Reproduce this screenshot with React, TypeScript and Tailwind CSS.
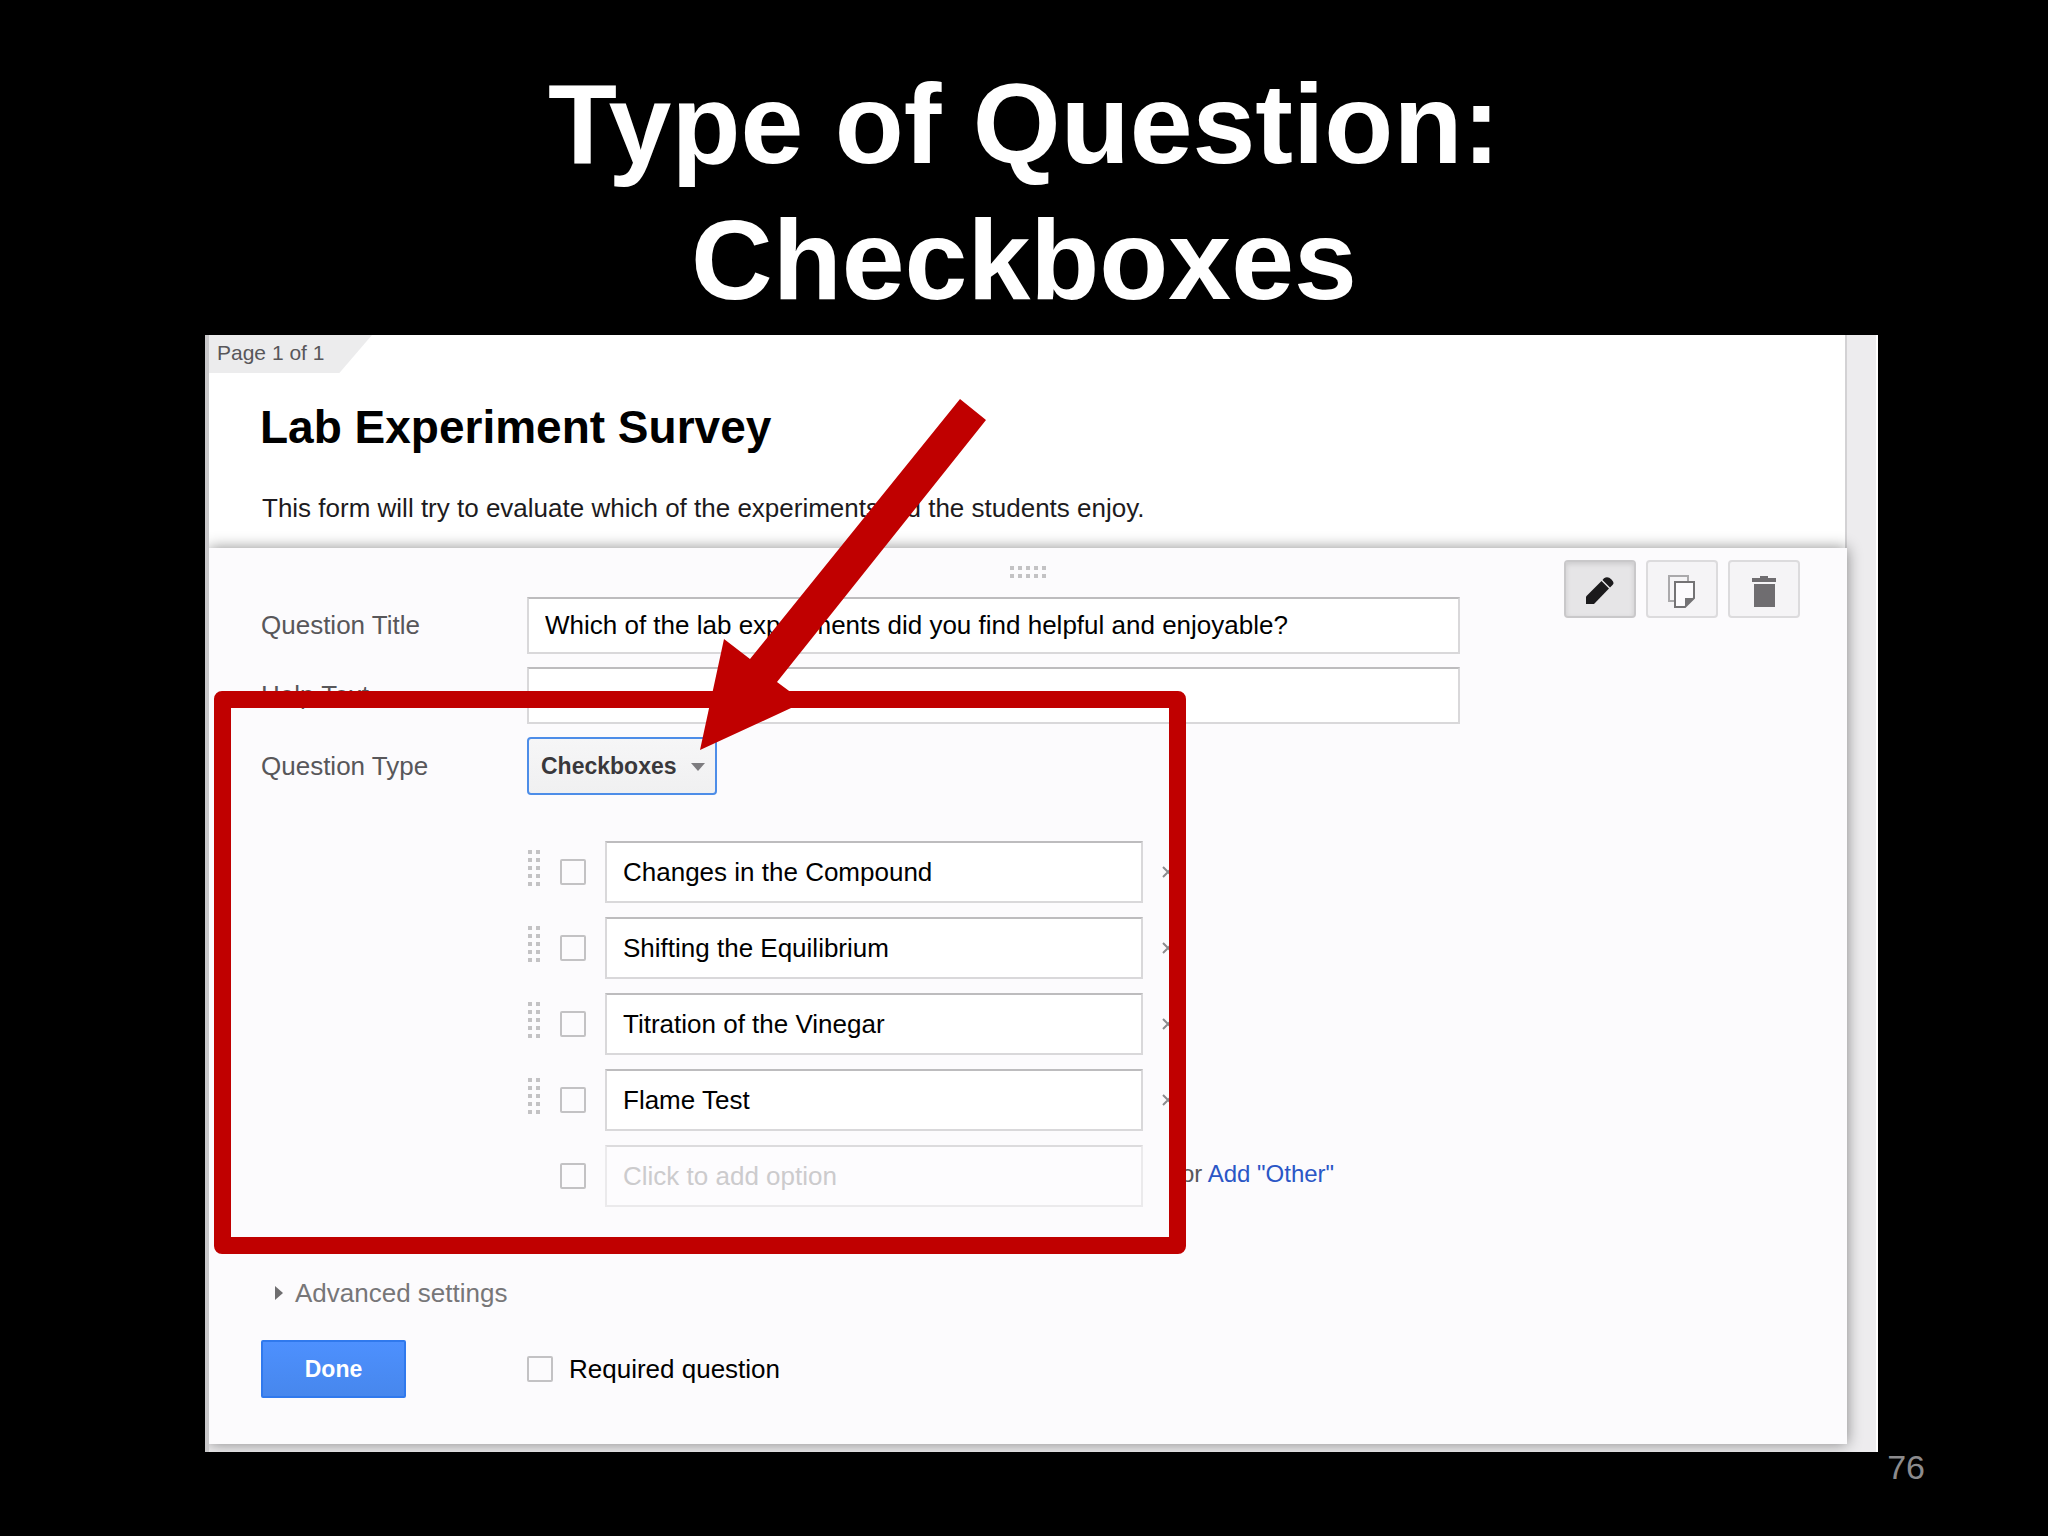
import { useState } from "react";

const INITIAL_OPTIONS = [
  "Changes in the Compound",
  "Shifting the Equilibrium",
  "Titration of the Vinegar",
  "Flame Test",
];

const QUESTION_TYPES = ["Checkboxes", "Text", "Multiple choice", "Scale", "Grid"];

interface DotGridProps {
  readonly columns: number;
  readonly rows: number;
}

/** Dotted drag handle, 4px dots on an 8px pitch. */
function DotGrid({ columns, rows }: DotGridProps) {
  const dots = Array.from({ length: columns * rows }, (_, i) => i);

  return (
    <svg
      width={columns * 8 - 4}
      height={rows * 8 - 4}
      className="block shrink-0 fill-[#c3c2c4]"
      aria-hidden
    >
      {dots.map((i) => (
        <rect key={i} x={(i % columns) * 8} y={Math.floor(i / columns) * 8} width="4" height="4" />
      ))}
    </svg>
  );
}

function PencilIcon() {
  return (
    <svg width="28" height="28" viewBox="0 0 28 28" fill="#1b1a1c" aria-hidden>
      <path d="M0 19.5 15.5 4l7.5 7.5L8 27H0z" />
      <path d="M16.5 3 18 1.2Q22-1 25.5 2.5T26.5 8L24 10.5z" />
    </svg>
  );
}

function CopyIcon() {
  return (
    <svg width="28" height="33" viewBox="0 0 28 33" fill="none" aria-hidden>
      <path d="M1 1h19v25H1z" stroke="#aaa9ab" strokeWidth="2" />
      <path d="M7 7h19v16l-9 9H7z" fill="#fcfbfd" stroke="#747375" strokeWidth="2" />
      <path d="M17 32v-9h9z" fill="#747375" />
    </svg>
  );
}

function TrashIcon() {
  return (
    <svg width="24" height="31" viewBox="0 0 24 31" fill="#6f6d70" aria-hidden>
      <path d="M8 0h8v2h8v4H0V2h8zM2 8h21v23H2z" />
    </svg>
  );
}

const TOOLS = [
  { label: "Edit", icon: <PencilIcon />, active: true },
  { label: "Duplicate", icon: <CopyIcon />, active: false },
  { label: "Delete", icon: <TrashIcon />, active: false },
];

const fieldClass =
  "border-2 border-[#d9d8da] border-t-[#bdbcbe] bg-white px-4 text-[26px] text-black outline-none";
const checkboxClass =
  "size-[26px] shrink-0 appearance-none rounded-xs border-2 border-[#c3c2c4] bg-[#fcfbfd] checked:bg-[#4a8cf7]";
const labelClass = "w-[266px] shrink-0 text-[26px] text-[#58575a]";

function OptionRows() {
  const [options, setOptions] = useState(INITIAL_OPTIONS);

  const rename = (index: number, value: string) => {
    setOptions(options.map((option, i) => (i === index ? value : option)));
  };

  return (
    <div className="mt-[46px] flex flex-col gap-3.5 pl-[267px]">
      {options.map((option, index) => (
        <div key={index} className="flex h-[62px] items-center">
          <div className="pb-2">
            <DotGrid columns={2} rows={5} />
          </div>
          <input type="checkbox" className={`ml-5 ${checkboxClass}`} aria-label={`Select option ${index + 1}`} />
          <input
            type="text"
            className={`ml-[19px] h-full w-[538px] ${fieldClass}`}
            aria-label={`Option ${index + 1}`}
            value={option}
            onChange={(e) => rename(index, e.target.value)}
          />
          <button
            type="button"
            className="ml-[19px]"
            aria-label={`Remove option ${index + 1}`}
            onClick={() => setOptions(options.filter((_, i) => i !== index))}
          >
            <svg width="12" height="12" viewBox="0 0 12 12" stroke="#8b8a8c" strokeWidth="2" aria-hidden>
              <path d="m1 1 10 10M11 1 1 11" />
            </svg>
          </button>
        </div>
      ))}
      <div className="flex h-[62px] items-center">
        <input type="checkbox" className={`ml-8 ${checkboxClass}`} aria-label="Select new option" />
        <input
          type="text"
          className="ml-[19px] h-full w-[538px] border-2 border-[#ebeaec] border-t-[#dcdbdd] bg-[#fdfcfe] px-4 text-[26px] outline-none placeholder:text-[#cccbcd]"
          aria-label="New option"
          placeholder="Click to add option"
        />
        <p className="ml-[38px] pb-1 text-2xl whitespace-nowrap text-[#58575a]">
          or{" "}
          <a href="#other" className="text-[#2a56c6]">
            Add "Other"
          </a>
        </p>
      </div>
    </div>
  );
}

function QuestionEditor() {
  const [title, setTitle] = useState("Which of the lab experiments did you find helpful and enjoyable?");

  return (
    <section className="relative bg-[#fcfbfd] pt-[49px] pr-12 pb-[46px] pl-[52px] shadow-[0_0_14px_rgba(0,0,0,0.45)]">
      <div className="absolute inset-x-0 top-[18px] flex justify-center">
        <DotGrid columns={5} rows={2} />
      </div>
      <div className="absolute top-3 right-[47px] flex gap-2.5">
        {TOOLS.map(({ label, icon, active }) => (
          <button
            key={label}
            type="button"
            aria-label={label}
            className={`flex h-[58px] w-[72px] items-center justify-center rounded-sm border-2 pt-1 ${
              active
                ? "border-[#c9c8ca] bg-[#e6e5e7] shadow-[inset_0_2px_5px_rgba(0,0,0,0.12)]"
                : "border-[#dcdbdd] bg-[#f5f4f6]"
            }`}
          >
            {icon}
          </button>
        ))}
      </div>

      <div className="flex flex-col gap-[13px] pr-[339px]">
        <div className="flex items-center">
          <label htmlFor="question-title" className={labelClass}>
            Question Title
          </label>
          <input
            id="question-title"
            type="text"
            className={`h-[57px] min-w-0 flex-1 ${fieldClass}`}
            value={title}
            onChange={(e) => setTitle(e.target.value)}
          />
        </div>
        <div className="flex items-center">
          <label htmlFor="help-text" className={labelClass}>
            Help Text
          </label>
          <input id="help-text" type="text" className={`h-[57px] min-w-0 flex-1 ${fieldClass}`} />
        </div>
        <div className="flex items-center">
          <label htmlFor="question-type" className={labelClass}>
            Question Type
          </label>
          <div className="relative">
            <select
              id="question-type"
              className="h-[58px] w-[190px] appearance-none rounded-sm border-2 border-[#4d8de8] bg-linear-to-b from-[#f6f6f7] to-[#f0f0f1] pl-3 text-[23px] font-bold text-[#39383b] outline-none"
            >
              {QUESTION_TYPES.map((type) => (
                <option key={type}>{type}</option>
              ))}
            </select>
            <svg
              width="14"
              height="8"
              viewBox="0 0 14 8"
              className="pointer-events-none absolute top-[26px] right-3"
              fill="#7d7c7f"
              aria-hidden
            >
              <path d="M0 0h14L7 8z" />
            </svg>
          </div>
        </div>
      </div>

      <OptionRows />

      <button type="button" className="mt-[67px] ml-3.5 flex items-center gap-3 text-[26px] leading-[38px] text-[#777678]">
        <svg width="8" height="14" viewBox="0 0 8 14" fill="#6f6e70" aria-hidden>
          <path d="M0 0v14l8-7z" />
        </svg>
        Advanced settings
      </button>

      <div className="mt-7 flex items-center">
        <button
          type="button"
          className="h-[58px] w-[145px] rounded-xs border-2 border-[#3079ed] bg-linear-to-b from-[#4d90fe] to-[#4787ed] text-[23px] font-bold text-white"
        >
          Done
        </button>
        <input id="required" type="checkbox" className={`ml-[121px] ${checkboxClass}`} />
        <label htmlFor="required" className="ml-4 text-[26px] text-black">
          Required question
        </label>
      </div>
    </section>
  );
}

function FormWindow() {
  return (
    <div className="relative overflow-hidden border-r-2 border-l-4 border-r-white border-l-[#c9c8ca] bg-[#edecee] pr-[29px] pb-2">
      <header className="h-[213px] border-r-2 border-[#d3d2d4] bg-white">
        <div className="h-[38px] w-[163px] bg-[#ececed] pl-2 text-[21px] leading-[36px] text-[#58575a] [clip-path:polygon(0_0,100%_0,80%_100%,0_100%)]">
          Page 1 of 1
        </div>
        <h2 className="mt-[27px] pl-[51px] text-[46px] leading-[54px] font-bold text-black">
          Lab Experiment Survey
        </h2>
        <p className="mt-[38px] pl-[53px] text-[26px] leading-[32px] text-[#1d1b20]">
          This form will try to evaluate which of the experiments did the students enjoy.
        </p>
      </header>
      <QuestionEditor />
    </div>
  );
}

/** Red frame and arrow drawn over the form. */
function Callout() {
  return (
    <>
      <div className="pointer-events-none absolute top-[356px] left-[9px] h-[563px] w-[972px] rounded-lg border-[17px] border-[#c00000]" />
      <svg
        width="286"
        height="352"
        viewBox="0 0 286 352"
        className="pointer-events-none absolute top-16 left-[495px] fill-[#c00000]"
        aria-hidden
      >
        <path d="M260 0 286 21 77 283l27 20L0 351 24 240l26 20z" />
      </svg>
    </>
  );
}

export default function App() {
  return (
    <main className="min-h-screen bg-black pt-14 font-['Liberation_Sans',Arial,sans-serif]">
      <h1 className="text-center text-[113px] leading-[136px] font-bold text-white">
        Type of Question:
        <br />
        Checkboxes
      </h1>
      <div className="relative mt-[7px] mr-[170px] ml-[205px]">
        <FormWindow />
        <Callout />
      </div>
      <footer className="pr-[123px] text-right text-[34px] leading-[30px] text-[#8c8b8d]">76</footer>
    </main>
  );
}
